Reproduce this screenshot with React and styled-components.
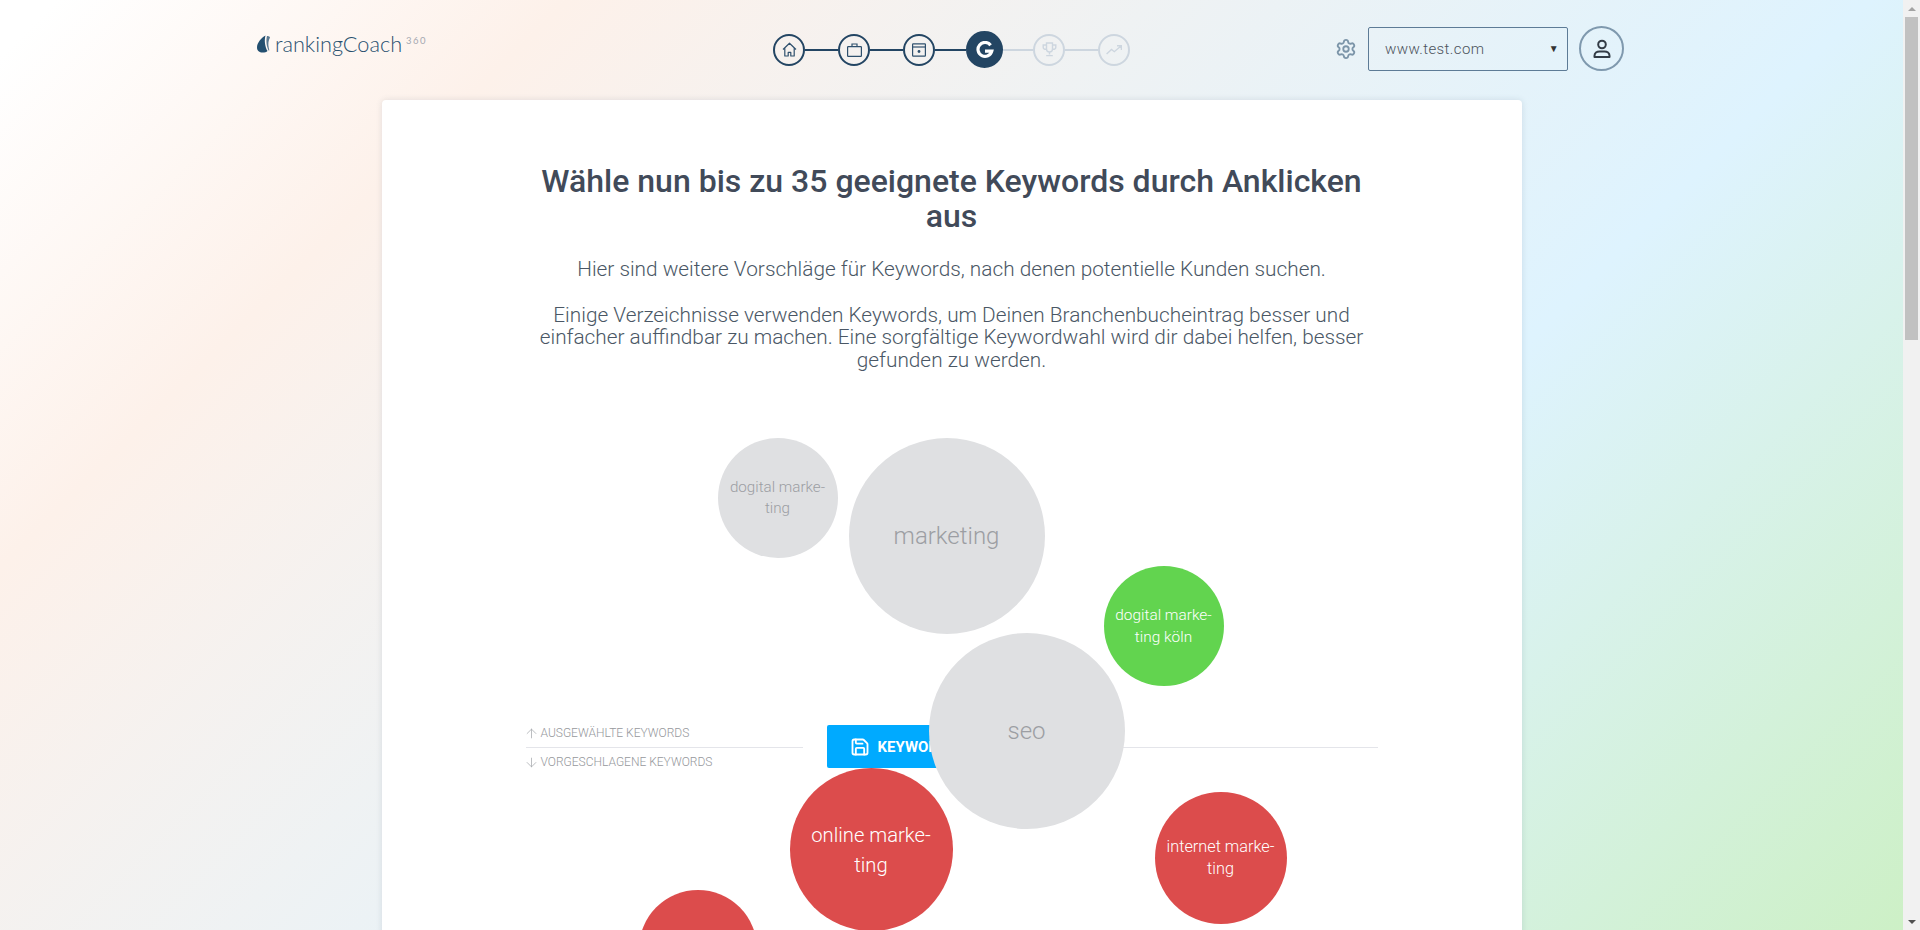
import React from 'react';
import styled, { createGlobalStyle } from 'styled-components';
import { Save, Settings, ArrowUp, ArrowDown } from 'lucide-react';

const GlobalStyle = createGlobalStyle`
  html, body {
    margin: 0;
    height: 100%;
    overflow: hidden;
  }
  body {
    font-family: Roboto, "Liberation Sans", sans-serif;
  }
`;

const Shell = styled.div`
  display: flex;
  height: 930px;
  overflow: hidden;
`;

const Page = styled.div`
  flex: 1;
  min-width: 0;
  height: 930px;
  overflow: hidden;
  background: linear-gradient(135deg, #ffffff 2%, #fdf1ea 20%, #def3fe 66%, #cdf0c6 100%);
`;

const Scrollbar = styled.div`
  width: 17px;
  display: flex;
  flex-direction: column;
  background: #f1f1f1;
`;

const ScrollArrow = styled.div`
  height: 17px;
  display: flex;
  align-items: center;
  justify-content: center;
  &::before {
    content: '';
    border-left: 4px solid transparent;
    border-right: 4px solid transparent;
    ${props => (props.down
    ? 'border-top: 4px solid #505050;'
    : 'border-bottom: 4px solid #a3a3a3;')}
  }
`;

const ScrollTrack = styled.div`
  flex: 1;
  padding: 0 2px;
`;

const ScrollThumb = styled.div`
  height: 323px;
  background: #c1c1c1;
`;

const Header = styled.header`
  height: 100px;
  padding: 0 279px 0 257px;
  box-sizing: border-box;
  position: relative;
  display: flex;
  align-items: flex-start;
  justify-content: space-between;
`;

const Logo = styled.div`
  display: flex;
  align-items: flex-start;
  padding-top: 32px;
  color: #28506f;
`;

const LogoText = styled.span`
  font-family: Lato, sans-serif;
  font-weight: 300;
  font-size: 21.7px;
  line-height: 24px;
  margin-left: 4px;
`;

const LogoSup = styled.span`
  font-family: Lato, sans-serif;
  font-size: 9.5px;
  letter-spacing: 1.4px;
  line-height: 10px;
  color: #a4a8b1;
  margin-left: 4px;
  margin-top: 4px;
`;

const Steps = styled.nav`
  position: absolute;
  left: 773px;
  top: 31px;
  display: flex;
  align-items: center;
  height: 37px;
`;

const Step = styled.div`
  width: ${props => (props.active ? 37 : 32)}px;
  height: ${props => (props.active ? 37 : 32)}px;
  box-sizing: border-box;
  border-radius: 50%;
  display: flex;
  align-items: center;
  justify-content: center;
  border: 2px solid ${props => (props.muted ? '#cdd6df' : '#234563')};
  background: ${props => (props.active ? '#234563' : 'transparent')};
  color: ${props => (props.muted ? '#cdd6df' : '#2f506d')};
`;

const Connector = styled.div`
  width: ${props => props.size}px;
  height: 2px;
  background: ${props => (props.muted ? '#cdd6df' : '#234563')};
`;

const Tools = styled.div`
  display: flex;
  align-items: center;
  padding-top: 26px;
`;

const Gear = styled(Settings)`
  width: 22px;
  height: 22px;
  color: #7c95a9;
  margin-right: 11px;
`;

const SiteSelect = styled.div`
  width: 200px;
  height: 44px;
  box-sizing: border-box;
  border: 1px solid #5d7b96;
  border-radius: 2px;
  padding: 0 8px 0 16px;
  display: flex;
  align-items: center;
  justify-content: space-between;
  font-size: 15px;
  font-weight: 300;
  letter-spacing: 0.4px;
  color: #4d545d;
`;

const Caret = styled.span`
  font-size: 10px;
  color: #333;
  margin-top: -1px;
`;

const Avatar = styled.div`
  width: 45px;
  height: 45px;
  box-sizing: border-box;
  margin-left: 11px;
  border-radius: 50%;
  border: 2px solid #7f99ae;
  display: flex;
  align-items: center;
  justify-content: center;
  color: #333c46;
`;

const Card = styled.main`
  width: 1140px;
  min-height: 900px;
  margin: 0 auto;
  padding-top: 64px;
  box-sizing: border-box;
  background: #fff;
  border-radius: 4px;
  box-shadow: 0 0 6px rgba(60, 80, 100, 0.14);
`;

const Content = styled.div`
  width: 852px;
  margin: 0 auto;
  text-align: center;
`;

const Title = styled.h1`
  margin: 0;
  font-size: 32px;
  line-height: 35px;
  font-weight: 500;
  color: #414a59;
`;

const Lead = styled.p`
  margin: ${props => props.gap}px 0 0;
  font-size: 20.8px;
  line-height: 22.6px;
  font-weight: 300;
  color: #4a5765;
`;

const Canvas = styled.div`
  position: relative;
  height: 560px;
  margin-top: 67px;
  text-align: left;
`;

const Divider = styled.div`
  position: absolute;
  top: 309px;
  height: 1px;
  width: 277px;
  ${props => (props.side === 'left' ? 'left: 0;' : 'right: 0;')}
  background: #e4e5ea;
`;

const ListLabel = styled.div`
  position: absolute;
  left: 0;
  top: ${props => props.top}px;
  display: flex;
  align-items: center;
  gap: 2px;
  font-size: 12px;
  font-weight: 300;
  line-height: 16px;
  color: #96989c;
  svg {
    width: 15px;
    height: 15px;
    margin: 2px 0 0 -2px;
    color: #a6a8ac;
  }
`;

const SaveButton = styled.button`
  position: absolute;
  left: 301px;
  top: 287px;
  width: 250px;
  height: 43px;
  border: 0;
  border-radius: 2px;
  padding: 0 0 0 23px;
  display: flex;
  align-items: center;
  gap: 8px;
  background: #00aaff;
  color: #fff;
  font-family: inherit;
  font-size: 15px;
  font-weight: 700;
  white-space: nowrap;
`;

const Bubble = styled.div`
  position: absolute;
  box-sizing: border-box;
  border-radius: 50%;
  display: flex;
  align-items: center;
  justify-content: center;
  text-align: center;
  font-weight: 300;
  width: ${props => props.size}px;
  height: ${props => props.size}px;
  left: ${props => props.x}px;
  top: ${props => props.y}px;
  font-size: ${props => props.fontSize}px;
  line-height: ${props => props.leading}px;
  background: ${props => ({ idle: '#dfe0e2', good: '#62d44f', bad: '#dc4c4c' }[props.tone])};
  color: ${props => (props.tone === 'idle' ? '#9c9ea3' : '#fff')};
`;

const bubbles = [
  { x: 192, y: 0, size: 120, fontSize: 15.2, leading: 21, tone: 'idle', lines: ['dogital marke-', 'ting'] },
  { x: 323, y: 0, size: 196, fontSize: 24, leading: 30, tone: 'idle', lines: ['marketing'] },
  { x: 578, y: 128, size: 120, fontSize: 15.4, leading: 22, tone: 'good', lines: ['dogital marke-', 'ting köln'] },
  { x: 403, y: 195, size: 196, fontSize: 24, leading: 30, tone: 'idle', lines: ['seo'] },
  { x: 264, y: 330, size: 163, fontSize: 20.2, leading: 30, tone: 'bad', lines: ['online marke-', 'ting'] },
  { x: 629, y: 354, size: 132, fontSize: 16.3, leading: 22, tone: 'bad', lines: ['internet marke-', 'ting'] },
  { x: 113, y: 452, size: 118, fontSize: 15, leading: 21, tone: 'bad', lines: [] },
];

function HomeIcon() {
  return (
    <svg width="15" height="15" viewBox="0 0 15 15" fill="none" stroke="currentColor" strokeWidth="1.2">
      <path d="M1 7.5 7.5 1.2 14 7.5M2.8 6v8h3.4v-3.6h2.6V14h3.4V6" strokeLinejoin="round" />
    </svg>
  );
}

function BagIcon() {
  return (
    <svg width="15" height="14" viewBox="0 0 15 14" fill="none" stroke="currentColor" strokeWidth="1.2">
      <rect x="0.6" y="3.6" width="13.8" height="9.8" rx="0.6" />
      <path d="M5 3.6V1h5v2.6" />
    </svg>
  );
}

function PlannerIcon() {
  return (
    <svg width="14" height="14" viewBox="0 0 14 14" fill="none" stroke="currentColor" strokeWidth="1.2">
      <rect x="0.6" y="0.8" width="12.8" height="12.4" rx="0.6" />
      <path d="M0.6 4h12.8" />
      <circle cx="7" cy="8.5" r="1.4" fill="currentColor" stroke="none" />
    </svg>
  );
}

function GoogleIcon() {
  return (
    <svg width="18" height="18" viewBox="0 0 18 18" fill="none" stroke="#fff" strokeWidth="3.2">
      <path d="M14.6 4.2A7 7 0 1 0 15.8 10.2H9" />
    </svg>
  );
}

function TrophyIcon() {
  return (
    <svg width="15" height="15" viewBox="0 0 15 15" fill="none" stroke="currentColor" strokeWidth="1.4">
      <path d="M4.5 1h6v6a3 3 0 0 1-6 0zM4.5 3H1.2v2.2a2 2 0 0 0 3.3 1.6M10.5 3h3.3v2.2a2 2 0 0 1-3.3 1.6M7.5 10v2.5M4.2 13.6h6.6" />
    </svg>
  );
}

function TrendIcon() {
  return (
    <svg width="16" height="10" viewBox="0 0 16 10" fill="none" stroke="currentColor" strokeWidth="1.4">
      <path d="M0.6 9 5.5 4.5l2.8 2.2L15 1M11 0.8h4.4V5" />
    </svg>
  );
}

function UserIcon() {
  return (
    <svg width="20" height="20" viewBox="0 0 20 20" fill="none" stroke="currentColor" strokeWidth="2">
      <circle cx="10" cy="5.5" r="3.8" />
      <path d="M2.5 18v-1.2C2.5 14 4.8 12.4 7.5 12.4h5c2.7 0 5 1.6 5 4.4V18z" strokeLinejoin="round" />
    </svg>
  );
}

function LogoMark() {
  return (
    <svg width="14" height="18" viewBox="0 0 14 18" style={{ marginTop: 3 }}>
      <path d="M8.5 0.5C4 3 0 8 0 12.5 0 15.8 2.5 17.6 5.5 17.6 7.7 17.6 9.5 17 10.5 16 8.2 12 7 6 8.5 0.5Z" fill="#234f70" />
      <path d="M10 1C11.5 1 12.8 1.6 13 2.4 11.5 5 10.8 9 11.8 13 12.2 14.6 12.4 15.4 12 16 9.5 12 8.8 5.5 10 1Z" fill="#234f70" opacity="0.75" />
    </svg>
  );
}

export default function App() {
  return (
    <>
      <GlobalStyle />
      <Shell>
        <Page>
          <Header>
            <Logo>
              <LogoMark />
              <LogoText>rankingCoach</LogoText>
              <LogoSup>360</LogoSup>
            </Logo>
            <Steps>
              <Step><HomeIcon /></Step>
              <Connector size={33} />
              <Step><BagIcon /></Step>
              <Connector size={33} />
              <Step><PlannerIcon /></Step>
              <Connector size={31} />
              <Step active><GoogleIcon /></Step>
              <Connector size={30} muted />
              <Step muted><TrophyIcon /></Step>
              <Connector size={33} muted />
              <Step muted><TrendIcon /></Step>
            </Steps>
            <Tools>
              <Gear strokeWidth={2} />
              <SiteSelect>
                www.test.com
                <Caret>▼</Caret>
              </SiteSelect>
              <Avatar><UserIcon /></Avatar>
            </Tools>
          </Header>
          <Card>
            <Content>
              <Title>Wähle nun bis zu 35 geeignete Keywords durch Anklicken aus</Title>
              <Lead gap={24}>Hier sind weitere Vorschläge für Keywords, nach denen potentielle Kunden suchen.</Lead>
              <Lead gap={23}>
                Einige Verzeichnisse verwenden Keywords, um Deinen Branchenbucheintrag besser und
                einfacher auffindbar zu machen. Eine sorgfältige Keywordwahl wird dir dabei helfen, besser
                gefunden zu werden.
              </Lead>
              <Canvas>
                <Divider side="left" />
                <Divider side="right" />
                <ListLabel top={286}><ArrowUp strokeWidth={1.2} />AUSGEWÄHLTE KEYWORDS</ListLabel>
                <ListLabel top={315}><ArrowDown strokeWidth={1.2} />VORGESCHLAGENE KEYWORDS</ListLabel>
                <SaveButton><Save size={20} strokeWidth={2.2} />KEYWORDS SPEICHERN</SaveButton>
                {bubbles.map(bubble => (
                  <Bubble key={`${bubble.x}-${bubble.y}`} x={bubble.x} y={bubble.y} size={bubble.size} fontSize={bubble.fontSize} leading={bubble.leading} tone={bubble.tone}>
                    <span>
                      {bubble.lines.map(line => <div key={line}>{line}</div>)}
                    </span>
                  </Bubble>
                ))}
              </Canvas>
            </Content>
          </Card>
        </Page>
        <Scrollbar>
          <ScrollArrow />
          <ScrollTrack><ScrollThumb /></ScrollTrack>
          <ScrollArrow down />
        </Scrollbar>
      </Shell>
    </>
  );
}
